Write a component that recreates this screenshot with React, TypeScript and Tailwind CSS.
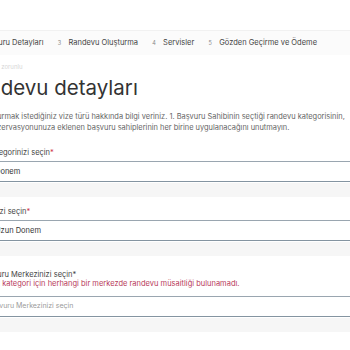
import React from "react";

type Step = { no: number; label: string };

const steps: Step[] = [
  { no: 2, label: "Başvuru Detayları" },
  { no: 3, label: "Randevu Oluşturma" },
  { no: 4, label: "Servisler" },
  { no: 5, label: "Gözden Geçirme ve Ödeme" },
];

function Field({
  label,
  value,
  placeholder,
  error,
  redStar = true,
  className,
  labelShift = "",
  inset = "pl-[15px]",
}: {
  label: string;
  value?: string;
  placeholder?: string;
  error?: string;
  redStar?: boolean;
  className?: string;
  labelShift?: string;
  inset?: string;
}) {
  return (
    <div className={className}>
      <div className={"text-[7.5px] leading-[10px] text-[#444] " + labelShift}>
        {label}
        <span className={redStar ? "text-[#d0344a]" : "text-[#444]"}>*</span>
      </div>
      {error && <div className="text-[7.5px] leading-[8px] text-[#b83a5a]">{error}</div>}
      <div
        className={
          "flex h-[21px] w-[400px] items-center border-t border-b border-t-[#9aa6b0] border-b-[#8494a1] bg-white " +
          inset +
          (error ? " mt-[8px]" : " mt-[3px]")
        }
      >
        {value ? (
          <span className="text-[7.5px] text-[#333]">{value}</span>
        ) : (
          <span className="text-[7px] text-[#9a9a9a]">{placeholder}</span>
        )}
      </div>
      <div className="mt-[1px] h-[14px] w-[400px] bg-[#f6f6f6]" />
    </div>
  );
}

export default function App() {
  return (
    <div className="h-[350px] w-[350px] overflow-hidden bg-white font-[Inter,sans-serif]">
      <div className="-ml-[20px] w-[400px]">
        <div className="h-[30px]" />

        <div className="flex h-[25px] items-center border-t border-[#f1f1f1] bg-[#fbfbfb]">
          <div className="-ml-[12px] flex items-center gap-[12px]">
            {steps.map((s) => (
              <div key={s.no} className="flex items-center gap-[5px]">
                <span className="w-[8px] text-center text-[5.5px] text-[#888]">{s.no}</span>
                <span className="text-[7.5px] text-[#444]">{s.label}</span>
              </div>
            ))}
          </div>
        </div>

        <div className="mt-[8px] text-[6px] leading-[8px] text-[#d6d6d6]">Alanlar zorunlu</div>

        <h1 className="-ml-[16px] mt-[5px] text-[20.5px] font-normal leading-[24px] text-[#333]">
          Randevu detayları
        </h1>

        <p className="mt-[11px] w-[380px] text-[7.45px] leading-[11px] text-[#666]">
          Başvurmak istediğiniz vize türü hakkında bilgi veriniz. 1. Başvuru Sahibinin seçtiği randevu kategorisinin,
          <br />
          ve rezervasyonunuza eklenen başvuru sahiplerinin her birine uygulanacağını unutmayın.
        </p>

        <Field className="mt-[15px]" label="Kategorinizi seçin" labelShift="ml-[7px]" value="Donem" />
        <Field className="mt-[10px]" label="Sürenizi seçin" labelShift="ml-[-3px]" value="Uzun Donem" />
        <Field
          className="mt-[14px]"
          label="Başvuru Merkezinizi seçin"
          redStar={false}
          error="Bu alt kategori için herhangi bir merkezde randevu müsaitliği bulunamadı."
          placeholder="Başvuru Merkezinizi seçin"
          inset="pl-[7px]"
        />
      </div>
    </div>
  );
}
